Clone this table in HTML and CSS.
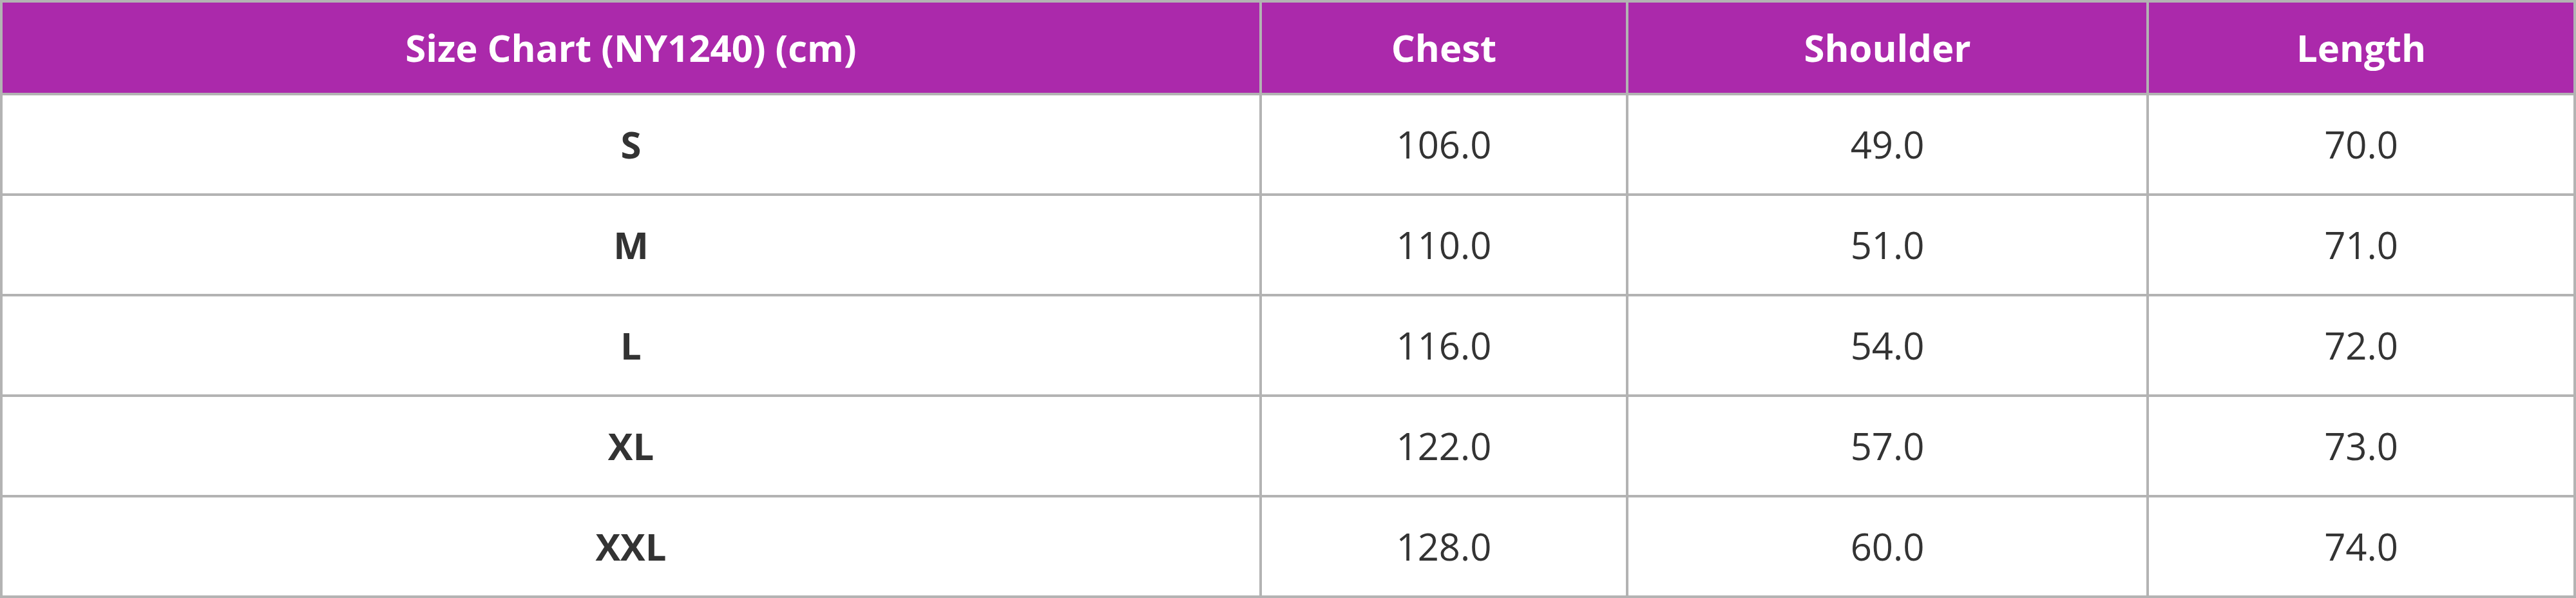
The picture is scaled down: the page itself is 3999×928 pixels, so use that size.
FILE: index.html
```html
<!DOCTYPE html>
<html lang="en">
<head>
<meta charset="utf-8">
<title>Size Chart (NY1240)</title>
<link rel="stylesheet" href="styles.css">
</head>
<body>
<div class="chart" role="table" aria-label="Size Chart (NY1240) (cm)">
  <div class="cell head" role="columnheader">Size Chart (NY1240) (cm)</div>
  <div class="cell head" role="columnheader">Chest</div>
  <div class="cell head" role="columnheader">Shoulder</div>
  <div class="cell head" role="columnheader">Length</div>

  <div class="cell size" role="rowheader">S</div>
  <div class="cell" role="cell">106.0</div>
  <div class="cell" role="cell">49.0</div>
  <div class="cell" role="cell">70.0</div>

  <div class="cell size" role="rowheader">M</div>
  <div class="cell" role="cell">110.0</div>
  <div class="cell" role="cell">51.0</div>
  <div class="cell" role="cell">71.0</div>

  <div class="cell size" role="rowheader">L</div>
  <div class="cell" role="cell">116.0</div>
  <div class="cell" role="cell">54.0</div>
  <div class="cell" role="cell">72.0</div>

  <div class="cell size" role="rowheader">XL</div>
  <div class="cell" role="cell">122.0</div>
  <div class="cell" role="cell">57.0</div>
  <div class="cell" role="cell">73.0</div>

  <div class="cell size" role="rowheader">XXL</div>
  <div class="cell" role="cell">128.0</div>
  <div class="cell" role="cell">60.0</div>
  <div class="cell" role="cell">74.0</div>
</div>
</body>
</html>
```
FILE: styles.css
```css
html, body {
  margin: 0;
  padding: 0;
  background: #ffffff;
}

.chart {
  display: grid;
  grid-template-columns: 1951px 565px 804px 659px;
  grid-template-rows: 140px repeat(5, 152px);
  gap: 4px;
  padding: 4px;
  width: 3999px;
  box-sizing: border-box;
  background: #b3b3b3;
  font-family: "Open Sans", "Noto Sans", sans-serif;
  font-size: 58px;
  color: #333333;
}

.cell {
  display: flex;
  align-items: center;
  justify-content: center;
  background: #ffffff;
  line-height: 1;
}

.head {
  background: #ab29ab;
  color: #ffffff;
  font-weight: 700;
}

.size {
  font-weight: 700;
}
```
